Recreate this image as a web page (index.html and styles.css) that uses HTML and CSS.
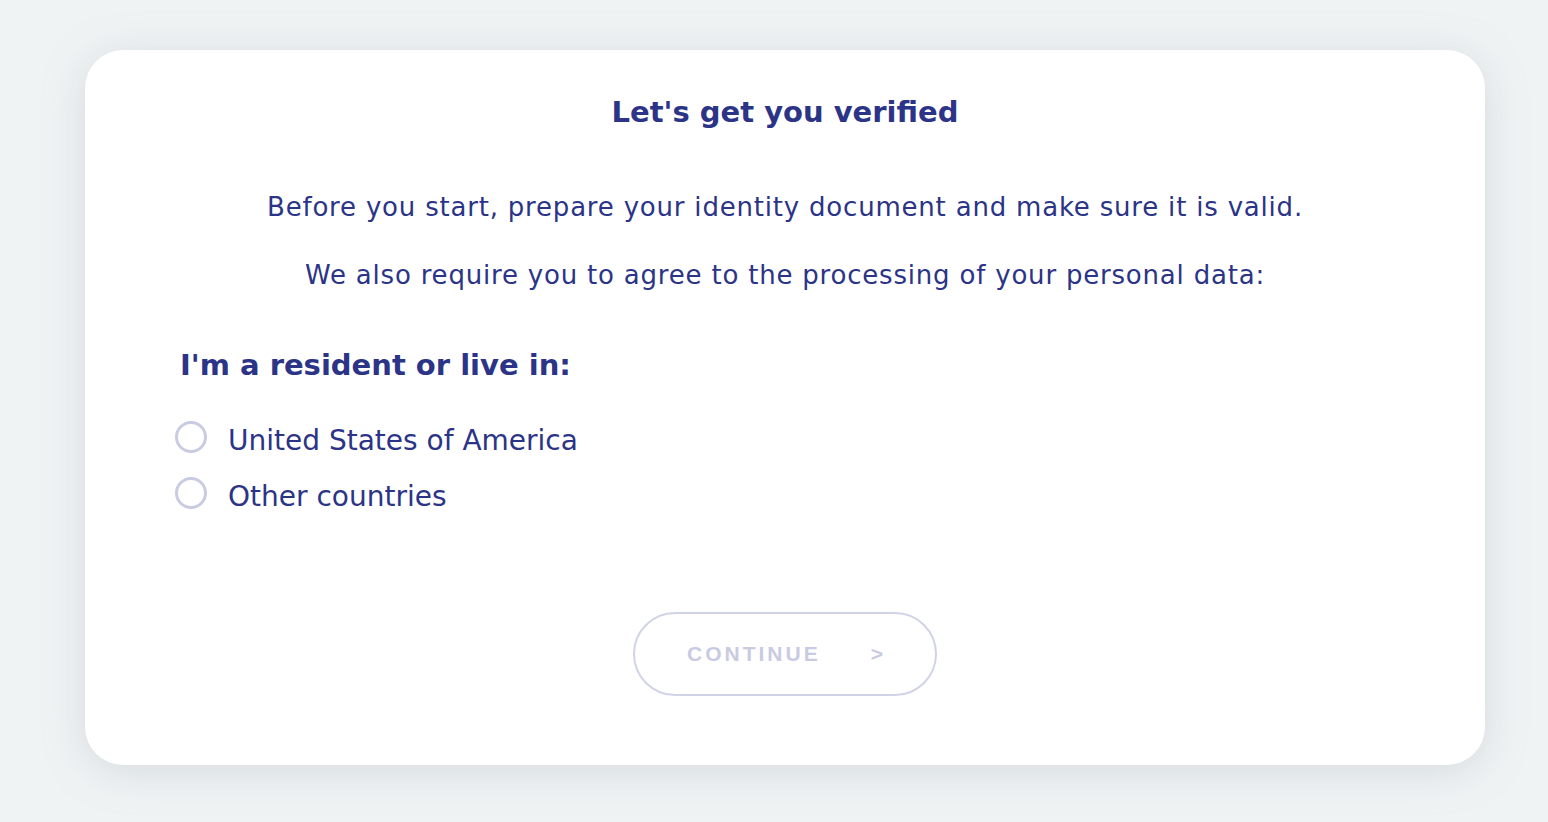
FILE: index.html
```html
<!DOCTYPE html>
<html lang="en">
<head>
<meta charset="utf-8">
<title>Let's get you verified</title>
<link rel="stylesheet" href="styles.css">
</head>
<body>
<main class="page">
  <section class="card">
    <h1 class="title">Let's get you verified</h1>
    <p class="text">Before you start, prepare your identity document and make sure it is valid.</p>
    <p class="text text-second">We also require you to agree to the processing of your personal data:</p>
    <h2 class="subtitle">I'm a resident or live in:</h2>
    <div class="options">
      <label class="option"><span class="radio"></span><span class="option-label">United States of America</span></label>
      <label class="option"><span class="radio"></span><span class="option-label">Other countries</span></label>
    </div>
    <div class="actions">
      <button class="continue" type="button"><span class="continue-text">CONTINUE</span><span class="continue-arrow">&gt;</span></button>
    </div>
  </section>
</main>
</body>
</html>
```
FILE: styles.css
```css
* { box-sizing: border-box; }
html, body { margin: 0; padding: 0; }
body {
  background: #f0f3f4;
  font-family: "DejaVu Sans", "Noto Sans", sans-serif;
  color: #2b3486;
  width: 1548px;
  height: 822px;
  overflow: hidden;
}
.page {
  padding: 50px 63px 0 85px;
}
.card {
  width: 1400px;
  height: 715px;
  background: #ffffff;
  border-radius: 38px;
  box-shadow: 0 6px 40px rgba(160, 175, 180, 0.35);
  padding: 44px 95px 0 95px;
  display: flex;
  flex-direction: column;
}
.title {
  margin: 0;
  text-align: center;
  font-size: 29px;
  font-weight: 700;
  line-height: 36px;
  color: #2b3486;
}
.text {
  margin: 61px 0 0 0;
  text-align: center;
  font-size: 26px;
  font-weight: 400;
  line-height: 32px;
  letter-spacing: 0.8px;
}
.text-second { margin-top: 36px; }
.subtitle {
  margin: 56px 0 0 0;
  font-size: 29px;
  font-weight: 700;
  line-height: 36px;
}
.options {
  display: flex;
  flex-direction: column;
  gap: 20px;
  margin: 40px 0 0 -5px;
}
.option {
  display: flex;
  align-items: center;
  gap: 21px;
  height: 36px;
}
.radio {
  width: 32px;
  height: 32px;
  border: 3px solid #c9cbe1;
  border-radius: 50%;
  flex: none;
  margin-top: -8px;
}
.option-label {
  font-size: 28px;
  line-height: 36px;
}
.actions {
  display: flex;
  justify-content: center;
  margin-top: 97px;
}
.continue {
  width: 304px;
  height: 84px;
  border: 2px solid #d1d3e7;
  border-radius: 42px;
  background: #ffffff;
  display: flex;
  align-items: center;
  justify-content: center;
  gap: 50px;
  font-family: "Liberation Sans", Arial, sans-serif;
  font-weight: 700;
  font-size: 21px;
  letter-spacing: 3px;
  color: #c9cbe2;
  padding: 0;
}
.continue-arrow { letter-spacing: 0; }
```
